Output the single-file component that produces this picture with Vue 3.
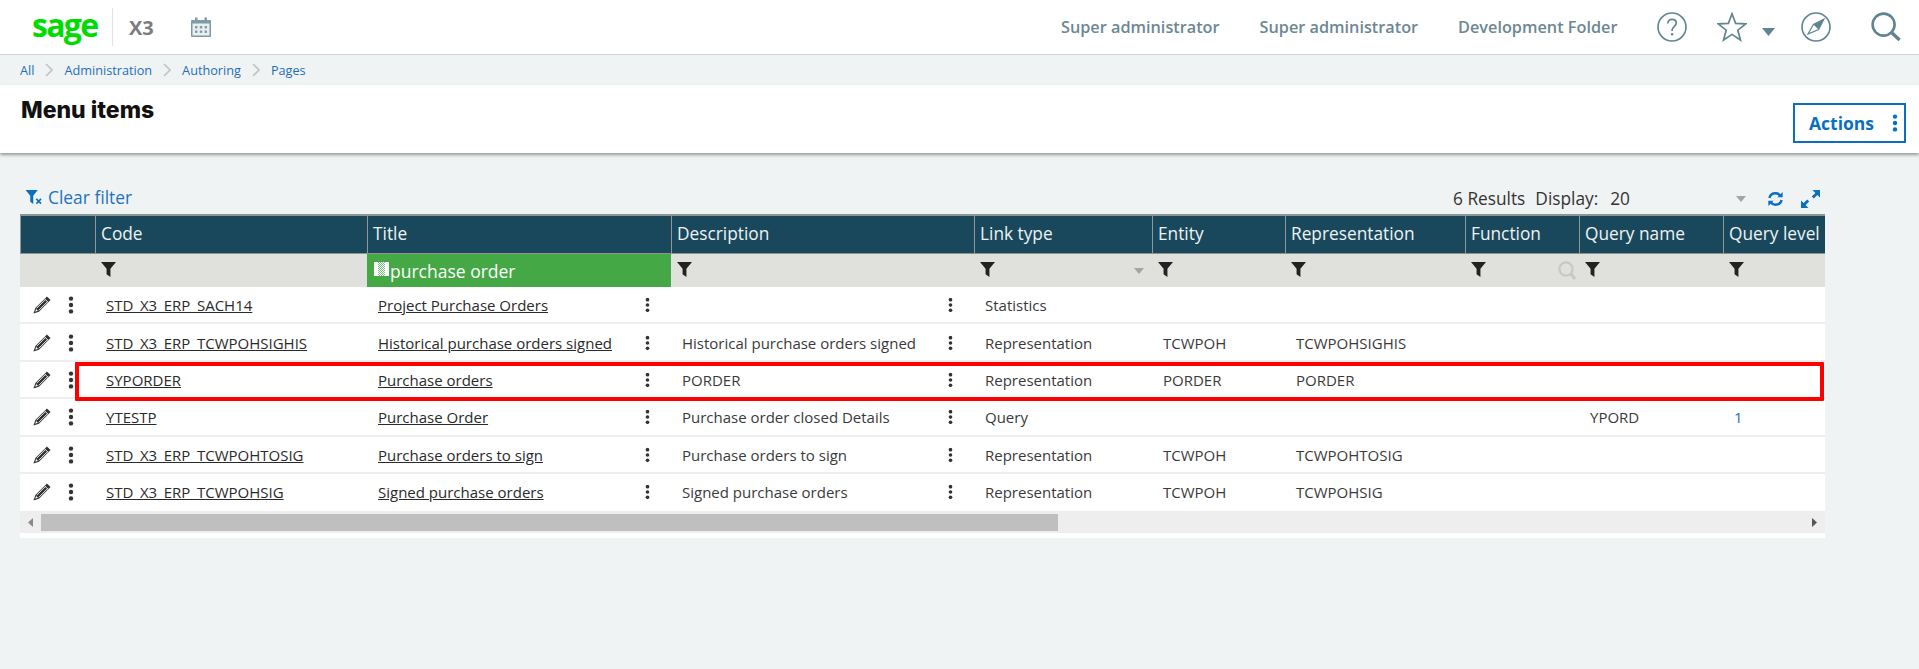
<script setup>
const columns = [
  { label: '', width: 75 },
  { label: 'Code', width: 272, filter: true },
  { label: 'Title', width: 304, search: 'purchase order' },
  { label: 'Description', width: 303, filter: true },
  { label: 'Link type', width: 178, filter: true, caret: true },
  { label: 'Entity', width: 133, filter: true },
  { label: 'Representation', width: 180, filter: true },
  { label: 'Function', width: 114, filter: true, lookup: true },
  { label: 'Query name', width: 144, filter: true },
  { label: 'Query level', width: 102, filter: true }
]

const rows = [
  { code: 'STD_X3_ERP_SACH14', title: 'Project Purchase Orders', desc: '', link: 'Statistics', entity: '', repr: '', query: '', level: '' },
  { code: 'STD_X3_ERP_TCWPOHSIGHIS', title: 'Historical purchase orders signed', desc: 'Historical purchase orders signed', link: 'Representation', entity: 'TCWPOH', repr: 'TCWPOHSIGHIS', query: '', level: '' },
  { code: 'SYPORDER', title: 'Purchase orders', desc: 'PORDER', link: 'Representation', entity: 'PORDER', repr: 'PORDER', query: '', level: '' },
  { code: 'YTESTP', title: 'Purchase Order', desc: 'Purchase order closed Details', link: 'Query', entity: '', repr: '', query: 'YPORD', level: '1' },
  { code: 'STD_X3_ERP_TCWPOHTOSIG', title: 'Purchase orders to sign', desc: 'Purchase orders to sign', link: 'Representation', entity: 'TCWPOH', repr: 'TCWPOHTOSIG', query: '', level: '' },
  { code: 'STD_X3_ERP_TCWPOHSIG', title: 'Signed purchase orders', desc: 'Signed purchase orders', link: 'Representation', entity: 'TCWPOH', repr: 'TCWPOHSIG', query: '', level: '' }
]

const crumbs = ['All', 'Administration', 'Authoring', 'Pages']
</script>

<template>
  <div class="page">
    <!-- shared icons -->
    <svg class="defs" width="0" height="0">
      <symbol id="funnel" viewBox="0 0 14 14">
        <path d="M0 0h14L8.800 6.400V14L5.200 11.400V6.400z" fill="#222" />
      </symbol>
      <symbol id="dots" viewBox="0 0 6 18">
        <circle cx="3" cy="2.600" r="2.200" />
        <circle cx="3" cy="9" r="2.200" />
        <circle cx="3" cy="15.400" r="2.200" />
      </symbol>
      <symbol id="pencil" viewBox="0 0 16 16">
        <path d="M12.400 .4 15.600 3.600 5.300 13.900 .4 15.600 2.100 10.700z" fill="#333" />
        <path d="M3.300 10.800 11 3.100M5.200 12.700 12.900 5" stroke="#fff" stroke-width=".8" />
        <path d="M10.300 2.500 13.500 5.700" stroke="#fff" stroke-width=".8" />
        <path d="M2.800 11.600 4.400 13.200 2 14z" fill="#fff" />
      </symbol>
    </svg>

    <header class="topbar">
      <div class="brand">
        <span class="sage">sage</span>
        <span class="product">X3</span>
        <svg class="calendar" viewBox="0 0 20 20" width="20" height="20">
          <path d="M1 3h18a1 1 0 0 1 1 1v15a1 1 0 0 1-1 1H1a1 1 0 0 1-1-1V4a1 1 0 0 1 1-1z" fill="#7f9ba9" />
          <rect x="1.500" y="6.500" width="17" height="12" fill="#e9eef0" />
          <rect x="4" y="0.500" width="2.500" height="4" fill="#7f9ba9" />
          <rect x="13.500" y="0.500" width="2.500" height="4" fill="#7f9ba9" />
          <g fill="#7f9ba9">
            <rect x="4" y="9" width="2.400" height="2.400" /><rect x="8.800" y="9" width="2.400" height="2.400" /><rect x="13.600" y="9" width="2.400" height="2.400" />
            <rect x="4" y="13.500" width="2.400" height="2.400" /><rect x="8.800" y="13.500" width="2.400" height="2.400" /><rect x="13.600" y="13.500" width="2.400" height="2.400" />
          </g>
        </svg>
      </div>
      <nav class="usermenu">
        <a>Super administrator</a>
        <a>Super administrator</a>
        <a>Development Folder</a>
      </nav>
      <div class="tools">
        <svg class="t-help" viewBox="0 0 30 30" width="30" height="30" fill="none" stroke="#5f8492">
          <circle cx="15" cy="15" r="14" stroke-width="1.600" />
          <path d="M10.800 11.500c0-2.600 1.900-4.200 4.300-4.200s4.200 1.500 4.200 3.800c0 3.400-4.200 3.600-4.200 7v.8" stroke-width="1.700" />
          <circle cx="15.100" cy="22.300" r="1.200" fill="#5f8492" stroke="none" />
        </svg>
        <svg class="t-star" viewBox="0 0 30 30" width="30" height="30" fill="none" stroke="#5f8492" stroke-width="1.700">
          <path d="M15 1.800 18.600 11.400 28.800 11.800 20.800 18.200 23.500 28 15 22.400 6.500 28 9.200 18.200 1.200 11.800 11.400 11.400z" />
        </svg>
        <svg class="t-caret" viewBox="0 0 13 8" width="13" height="8"><path d="M0 0h13L6.500 8z" fill="#5f8492" /></svg>
        <svg class="t-compass" viewBox="0 0 30 30" width="30" height="30" fill="none" stroke="#5f8492">
          <circle cx="15" cy="15" r="14" stroke-width="1.600" />
          <path d="M23 7 17.600 17.600 7 22 12.400 12.400z" stroke-width="1.200" />
          <path d="M23 7 17.600 17.600 12.400 12.400z" fill="#5f8492" stroke="none" />
        </svg>
        <svg class="t-search" viewBox="0 0 30 30" width="30" height="30" fill="none" stroke="#5f8492">
          <circle cx="12.600" cy="12.600" r="11" stroke-width="2.600" />
          <path d="M20.800 20.800 28.600 28" stroke-width="3.400" />
        </svg>
      </div>
    </header>

    <div class="breadcrumb">
      <template v-for="(c, i) in crumbs" :key="c">
        <a>{{ c }}</a>
        <svg v-if="i < crumbs.length - 1" viewBox="0 0 8 14" width="8" height="14" fill="none" stroke="#c0c4c6" stroke-width="1.600">
          <path d="M1 1l6 6-6 6" />
        </svg>
      </template>
    </div>

    <section class="titlebar">
      <h1>Menu items</h1>
      <button class="actions">
        <span>Actions</span>
        <svg viewBox="0 0 6 18" width="6" height="18" fill="#0b6fc0"><use href="#dots" /></svg>
      </button>
    </section>

    <main class="content">
      <div class="toolbar">
        <a class="clear">
          <svg viewBox="0 0 18 16" width="18" height="15">
            <path d="M0 0h13L8.200 6v9L5 12.600V6z" fill="#0b6fc0" />
            <path d="M11.500 9.500l5 5M16.500 9.500l-5 5" stroke="#0b6fc0" stroke-width="1.700" />
          </svg>
          Clear filter
        </a>
        <div class="paging">
          <span>6 Results</span>
          <span class="display">Display:</span>
          <span class="size">20</span>
          <svg class="size-caret" viewBox="0 0 10 6" width="10" height="6"><path d="M0 0h10L5 6z" fill="#a3a5a5" /></svg>
          <svg class="refresh" viewBox="0 0 18 16" width="17" height="16" fill="none" stroke="#0b6fc0" stroke-width="2.600">
            <path d="M2.600 7C3.200 4 5.800 2 9 2c2.200 0 4 1 5.200 2.600" />
            <path d="M15.400 9c-.6 3-3.200 5-6.400 5-2.200 0-4-1-5.200-2.600" />
            <path d="M16.600.6v5.600H11zM1.400 15.400V9.800H7z" fill="#0b6fc0" stroke="none" />
          </svg>
          <svg class="expand" viewBox="0 0 19 18" width="19" height="18" fill="#0b6fc0">
            <path d="M11.500 0H19v7.500l-2.600-2.600-3.600 3.600-2-2 3.600-3.600zM7.500 18H0v-7.500l2.600 2.600 3.600-3.600 2 2-3.600 3.600z" />
          </svg>
        </div>
      </div>

      <div class="grid-wrap">
        <table class="grid">
          <colgroup>
            <col v-for="c in columns" :key="c.label" :style="{ width: c.width + 'px' }" />
          </colgroup>
          <thead>
            <tr class="heads">
              <th v-for="c in columns" :key="c.label">{{ c.label }}</th>
            </tr>
            <tr class="filters">
              <td v-for="c in columns" :key="c.label" :class="{ active: c.search }">
                <div v-if="c.search" class="search-val">
                  <svg viewBox="0 0 15 14" width="15" height="14">
                    <defs>
                      <pattern id="dither" width="2" height="2" patternUnits="userSpaceOnUse">
                        <rect width="1" height="1" fill="#7cc27e" />
                        <rect x="1" y="1" width="1" height="1" fill="#7cc27e" />
                      </pattern>
                    </defs>
                    <rect width="15" height="14" fill="#fff" />
                    <rect x="4" y="0" width="7" height="14" fill="url(#dither)" />
                  </svg>
                  {{ c.search }}
                </div>
                <div v-else-if="c.filter" class="filter-cell">
                  <svg viewBox="0 0 14 14" width="15" height="15"><use href="#funnel" /></svg>
                  <svg v-if="c.caret" class="f-caret" viewBox="0 0 10 6" width="10" height="6"><path d="M0 0h10L5 6z" fill="#a5a5a0" /></svg>
                  <svg v-if="c.lookup" class="f-lookup" viewBox="0 0 18 20" width="18" height="20" fill="none" stroke="#c8c8c4">
                    <circle cx="8" cy="8" r="6.600" stroke-width="2.200" />
                    <path d="M13 13l4 5" stroke-width="3" />
                  </svg>
                </div>
              </td>
            </tr>
          </thead>
          <tbody>
            <tr v-for="r in rows" :key="r.code" class="row">
              <td>
                <div class="row-tools">
                  <svg viewBox="0 0 16 16" width="18" height="18"><use href="#pencil" /></svg>
                  <svg viewBox="0 0 6 18" width="6" height="18" fill="#333"><use href="#dots" /></svg>
                </div>
              </td>
              <td class="txt"><a>{{ r.code }}</a></td>
              <td class="txt">
                <div class="with-menu"><a>{{ r.title }}</a><svg viewBox="0 0 6 18" width="5" height="16" fill="#333"><use href="#dots" /></svg></div>
              </td>
              <td class="txt">
                <div class="with-menu"><span>{{ r.desc }}</span><svg viewBox="0 0 6 18" width="5" height="16" fill="#333"><use href="#dots" /></svg></div>
              </td>
              <td class="txt">{{ r.link }}</td>
              <td class="txt">{{ r.entity }}</td>
              <td class="txt">{{ r.repr }}</td>
              <td class="txt"></td>
              <td class="txt">{{ r.query }}</td>
              <td class="txt level">{{ r.level }}</td>
            </tr>
          </tbody>
        </table>

        <div class="scrollbar">
          <svg viewBox="0 0 5 9" width="5" height="9"><path d="M5 0v9L0 4.500z" fill="#8a8a8a" /></svg>
          <div class="track"><div class="thumb"></div></div>
          <svg viewBox="0 0 5 9" width="5" height="9"><path d="M0 0v9l5-4.500z" fill="#555" /></svg>
        </div>

        <div class="highlight"></div>
      </div>
    </main>
  </div>
</template>

<style>
html, body {
  margin: 0;
  background: #f0f3f4;
}
</style>

<style scoped>
.page {
  min-height: 669px;
  background: #f0f3f4;
  font-family: 'Open Sans', 'Liberation Sans', sans-serif;
  color: #333;
  overflow: hidden;
}
.defs {
  position: absolute;
}

/* --- top bar --- */
.topbar {
  height: 54px;
  background: #fff;
  border-bottom: 1px solid #cfd5d8;
  display: flex;
  align-items: center;
}
.brand {
  display: flex;
  align-items: center;
  width: 1061px;
  padding-left: 32px;
  box-sizing: border-box;
}
.sage {
  width: 81px;
  height: 38px;
  line-height: 33px;
  border-right: 1px solid #e2e5e6;
  font-family: 'Open Sans', sans-serif;
  font-size: 32px;
  font-weight: 700;
  letter-spacing: -1.700px;
  color: #00dc00;
  box-sizing: border-box;
}
.product {
  margin-left: 16px;
  font-size: 20px;
  font-weight: 700;
  color: #7d7d7d;
}
.calendar {
  margin-left: 37px;
}
.usermenu {
  display: flex;
  gap: 40px;
  font-size: 16.250px;
  font-weight: 600;
  color: #6d8793;
}
.tools {
  display: flex;
  align-items: center;
  margin-left: 40px;
}
.t-star {
  margin-left: 30px;
}
.t-caret {
  margin-left: 15px;
  margin-top: 9px;
}
.t-compass {
  margin-left: 26px;
}
.t-search {
  margin-left: 40px;
}

/* --- breadcrumb --- */
.breadcrumb {
  height: 30px;
  padding-left: 20px;
  display: flex;
  align-items: center;
  gap: 11px;
  font-size: 12.700px;
  color: #1d6fb8;
}

/* --- title --- */
.titlebar {
  height: 68px;
  background: #fff;
  box-shadow: 0 2px 3px #9a9a9a;
  display: flex;
  justify-content: space-between;
  padding: 0 13px 0 21px;
}
.titlebar h1 {
  margin: 10px 0 0;
  font-family: Inter, 'Liberation Sans', sans-serif;
  font-size: 23px;
  line-height: 30px;
  font-weight: 800;
  color: #111;
}
.actions {
  align-self: flex-start;
  margin-top: 18px;
  width: 113px;
  height: 40px;
  padding: 0 6px 0 14px;
  display: flex;
  align-items: center;
  justify-content: space-between;
  border: 2px solid #0b6fc0;
  background: #fff;
  font-family: inherit;
  font-size: 17.500px;
  font-weight: 700;
  color: #0b6fc0;
}

/* --- content --- */
.content {
  padding: 0 94px 0 20px;
}
.toolbar {
  height: 61px;
  display: flex;
  justify-content: space-between;
  align-items: flex-end;
  box-sizing: border-box;
}
.clear {
  display: flex;
  align-items: center;
  gap: 5px;
  margin-left: 5px;
  margin-bottom: 5px;
  font-size: 17.400px;
  line-height: 24px;
  color: #1d74bd;
}
.paging {
  display: flex;
  align-items: center;
  margin-bottom: 3px;
  font-size: 17.300px;
  line-height: 24px;
  color: #333;
}
.display {
  margin-left: 10px;
}
.size {
  margin-left: 12px;
}
.size-caret {
  margin-left: 106px;
}
.refresh {
  margin-left: 21px;
}
.expand {
  margin-left: 17px;
  margin-right: 5px;
}

.grid-wrap {
  position: relative;
  width: 1805px;
  background: #fff;
  padding-bottom: 5px;
}
.grid {
  width: 1805px;
  table-layout: fixed;
  border-collapse: separate;
  border-spacing: 0;
}
.heads th {
  height: 40px;
  padding: 0 0 2px 5px;
  box-sizing: border-box;
  background: #19485c;
  border-top: 2px solid #8d958e;
  border-bottom: 1px solid #8d958e;
  border-left: 1px solid #8d9a9a;
  text-align: left;
  font-size: 17.300px;
  font-weight: 400;
  color: #eef2f3;
  white-space: nowrap;
  overflow: hidden;
}
.filters td {
  height: 33px;
  padding: 0;
  background: #e0e0dc;
}
.filters td.active {
  background: #44a845;
}
.search-val {
  display: flex;
  align-items: center;
  gap: 1px;
  padding-left: 7px;
  font-size: 17.500px;
  color: #fff;
  white-space: nowrap;
}
.search-val svg {
  margin-top: -3px;
}
.filter-cell {
  display: flex;
  align-items: center;
  padding-left: 6px;
  height: 33px;
}
.filter-cell svg:first-child {
  margin-top: -3px;
}
.f-caret {
  margin-left: auto;
  margin-right: 8px;
}
.f-lookup {
  margin-left: auto;
  margin-right: 3px;
  margin-top: 0;
}
.row td {
  height: 37.400px;
  padding: 1px 0 0;
  box-sizing: border-box;
  border-bottom: 2px solid #eeeeee;
  font-size: 15px;
  color: #3a3a3a;
  white-space: nowrap;
  overflow: hidden;
}
.row:last-child td {
  border-bottom-color: #fff;
}
.row td.txt {
  padding-left: 11px;
}
.row a {
  color: #2a2a2a;
  text-decoration: underline;
}
.row td.level {
  color: #1d6fb8;
}
.row-tools {
  display: flex;
  align-items: center;
  padding-left: 13px;
  gap: 17px;
}
.with-menu {
  display: flex;
  justify-content: space-between;
  align-items: center;
  padding-right: 21px;
}

/* --- scrollbar --- */
.scrollbar {
  height: 22px;
  background: #eeeeee;
  display: flex;
  align-items: center;
  padding: 0 8px;
  gap: 8px;
}
.track {
  flex: 1;
  height: 17px;
}
.thumb {
  width: 1017px;
  height: 17px;
  background: #bfbfbf;
}

/* annotation drawn over the grid */
.highlight {
  position: absolute;
  top: 148px;
  left: 55px;
  width: 1749px;
  height: 39px;
  box-sizing: border-box;
  border: 4px solid #ff0000;
  border-radius: 1px;
}
</style>
